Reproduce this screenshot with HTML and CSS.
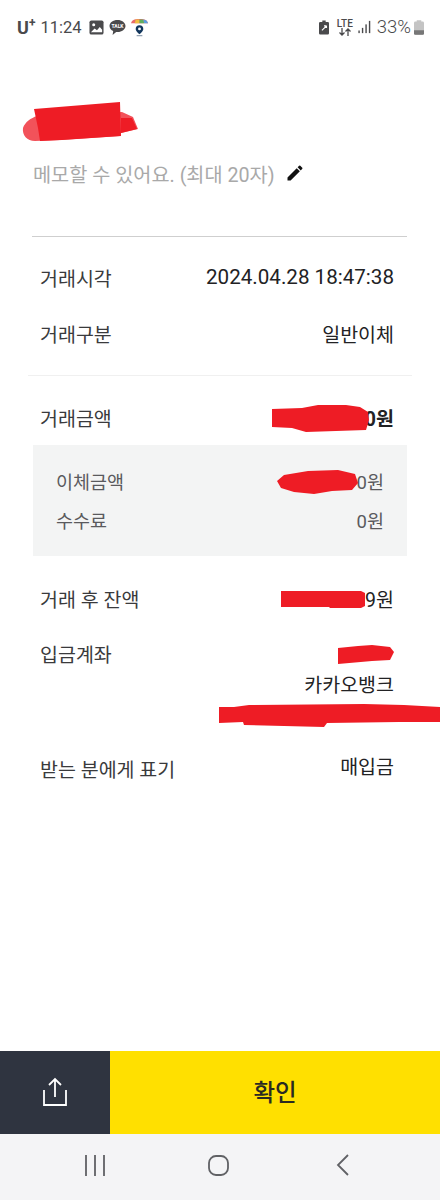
FILE: index.html
```html
<!DOCTYPE html>
<html lang="ko">
<head>
    <meta charset="UTF-8">
    <meta name="viewport" content="width=device-width, initial-scale=1.0">
    <title>거래 상세</title>
    <link rel="stylesheet" href="styles.css">
</head>
<body>
    <div class="status-bar">
        <div class="status-left">
            <span class="carrier">U<sup>+</sup></span>
            <span class="clock">11:24</span>
            <svg class="icon-gallery" width="15" height="15" viewBox="0 0 16 16"><rect x="0.5" y="0.5" width="15" height="15" rx="2" fill="#4a4a4c"/><circle cx="5" cy="5" r="1.6" fill="#fff"/><path d="M2 13l4-4 2.500 2 3-3.500 2.500 3V13z" fill="#fff"/></svg>
            <svg class="icon-talk" width="17" height="17" viewBox="0 0 17 17"><path d="M8.500 1C4 1 .5 3.600.5 7c0 2.200 1.500 4 3.700 5.100L3.600 16l3.600-3.100c.4.100.9.100 1.300.100 4.500 0 8-2.700 8-6S13 1 8.500 1z" fill="#4a4a4c"/><text x="8.500" y="9" class="talk-text" text-anchor="middle">TALK</text></svg>
            <svg class="icon-map" width="19" height="19" viewBox="0 0 20 20"><path d="M1 5.500C2 2 4 1 10 1s8 1 9 4.500z" fill="#e86a6a"/><path d="M6 1.500h4V5.500H5z" fill="#f0c040"/><path d="M10 1.500h4l1 4h-5z" fill="#60b060"/><path d="M14 1.500c3 .3 4 1.500 5 4h-4z" fill="#5aa0e0"/><path d="M10 7.500a4 4 0 0 1 4 4c0 2.500-4 5.500-4 5.500s-4-3-4-5.500a4 4 0 0 1 4-4z" fill="#12365c"/><circle cx="10" cy="11.500" r="1.500" fill="#fff"/><rect x="7" y="18" width="6" height="1.200" fill="#8a9aac"/></svg>
        </div>
        <div class="status-right">
            <svg width="10" height="15" viewBox="0 0 12 17"><path d="M4 0h4v2h2.500A1.500 1.500 0 0 1 12 3.500v12a1.500 1.500 0 0 1-1.500 1.500h-9A1.500 1.500 0 0 1 0 15.500v-12A1.500 1.500 0 0 1 1.500 2H4z" fill="#4a4a4c"/><path d="M9 6.500L3.500 12 M9 6.500H6 M9 6.500V9" fill="none" stroke="#fff" stroke-width="1.300"/></svg>
            <span class="lte"><span class="lte-text">LTE</span><svg width="14" height="8" viewBox="0 0 14 8"><path d="M4 0v7M1.500 4.500L4 7l2.500-2.500M10 8V1M7.500 3.500L10 1l2.500 2.500" fill="none" stroke="#4a4a4c" stroke-width="1.300"/></svg></span>
            <svg width="13" height="14" viewBox="0 0 14 16"><rect x="0" y="12" width="1.600" height="3" fill="#4a4a4c"/><rect x="4" y="9" width="1.600" height="6" fill="#4a4a4c"/><rect x="8" y="5" width="1.600" height="10" fill="#4a4a4c"/><rect x="12" y="1" width="1.600" height="14" fill="#4a4a4c"/></svg>
            <span class="battery-pct">33%</span>
            <svg width="10" height="15" viewBox="0 0 11 16"><path d="M3 0h5v1.500h1.500A1.500 1.500 0 0 1 11 3v11.500a1.500 1.500 0 0 1-1.500 1.500h-8A1.500 1.500 0 0 1 0 14.500V3a1.500 1.500 0 0 1 1.500-1.500H3z" fill="#c4c4c4"/><path d="M0 11h11v3.500a1.500 1.500 0 0 1-1.500 1.500h-8A1.500 1.500 0 0 1 0 14.500z" fill="#777"/></svg>
        </div>
    </div>

    <div class="content">
        <div class="heading"></div>
        <div class="memo">
            <span>메모할 수 있어요. (최대 20자)</span>
            <svg width="20" height="20" viewBox="0 0 24 24"><path d="M3 17.250V21h3.750L17.810 9.940l-3.750-3.750L3 17.250zM20.710 7.040a1 1 0 0 0 0-1.410l-2.340-2.340a1 1 0 0 0-1.410 0l-1.830 1.830 3.750 3.750 1.830-1.830z" fill="#111"/></svg>
        </div>

        <hr class="line">

        <div class="group first">
            <div class="row"><span>거래시각</span><span class="value date">2024.04.28 18:47:38</span></div>
            <div class="row"><span>거래구분</span><span class="value">일반이체</span></div>
        </div>

        <hr class="line-thin">

        <div class="row amount"><span>거래금액</span><span class="value strong">0원</span></div>
        <div class="detail">
            <div class="detail-row"><span>이체금액</span><span>0원</span></div>
            <div class="detail-row"><span>수수료</span><span>0원</span></div>
        </div>

        <div class="row balance"><span>거래 후 잔액</span><span class="value">9원</span></div>
        <div class="row account">
            <span>입금계좌</span>
            <div class="account-info">
                <span class="value">카카오뱅크</span>
            </div>
        </div>
        <div class="row receiver"><span>받는 분에게 표기</span><span class="value">매입금</span></div>
    </div>

    <div class="actions">
        <button class="share" aria-label="공유">
            <svg width="24" height="29" viewBox="0 0 24 29"><path d="M12 20V2M6 8l6-6 6 6M1 13v15h22V13" fill="none" stroke="#fff" stroke-width="1.800"/></svg>
        </button>
        <button class="confirm">확인</button>
    </div>

    <div class="nav-bar">
        <svg class="nav-recent" width="20" height="21" viewBox="0 0 20 21"><path d="M1 0v21M10 0v21M19 0v21" fill="none" stroke="#606165" stroke-width="1.800"/></svg>
        <svg class="nav-home" width="21" height="21" viewBox="0 0 21 21"><rect x="1" y="1" width="19" height="19" rx="7" fill="none" stroke="#606165" stroke-width="1.800"/></svg>
        <svg class="nav-back" width="13" height="22" viewBox="0 0 13 22"><path d="M12 1L2 11l10 10" fill="none" stroke="#606165" stroke-width="1.800"/></svg>
    </div>

    <!-- red marker scribbles painted over the screenshot -->
    <svg class="scribbles" width="440" height="1200" viewBox="0 0 440 1200">
        <g fill="#ee1c25">
            <path d="M23 128c2-6 8-10 14-12l85-4 11 5 5 12-17 4-1 3-60 4-25 1c-8 0-13-6-12-13z" fill="#f2525a"/>
            <path d="M34 109l86-7 1 34-59 4-22 1-2-13z"/>
            <path d="M121 118l11 0 5 11-16 4z"/>
            <path d="M272 409l30-1 16-3h28l14 2 8 5 1 8-3 10-30 1-30 1-14-4-20-1z"/>
            <path d="M277 481l7-6 24-4 30-1 17 4 3 9-6 7-20 1-18 3-20-2-13-4z"/>
            <path d="M281 591h80l4 2v13l-4 2h-31l-1-1h-48z"/>
            <path d="M338 648l20-2 14-1 18 2 4 5-4 8-18 1-34 3z"/>
            <path d="M219 707h15l15-2 115-1 40 1 36 2v15h-41l-72 1-3 4-80-2-1-3-24 1z"/>
        </g>
    </svg>
</body>
</html>
```

FILE: styles.css
```css
/* General Styles */
html, body {
    margin: 0;
    height: 100%;
}

body {
    position: relative;
    display: flex;
    flex-direction: column;
    height: 1200px;
    overflow: hidden;
    background-color: #fff;
    color: #3a3a3c;
    font-family: "Roboto", "Noto Sans CJK KR", sans-serif;
    font-size: 19.5px;
}

/* Status bar */
.status-bar {
    display: flex;
    justify-content: space-between;
    align-items: center;
    height: 54px;
    padding: 0 16px 0 17px;
    box-sizing: border-box;
    color: #4a4a4c;
}

.status-left, .status-right {
    display: flex;
    align-items: center;
}

.status-left {
    gap: 5px;
}

.status-right {
    gap: 5px;
}

.carrier {
    font-size: 18px;
    font-weight: 700;
}

.carrier sup {
    font-size: 12px;
    line-height: 0;
}

.clock {
    font-size: 16.500px;
    margin: 0 2px 0 0;
}

.icon-map {
    margin-left: -1px;
}

.talk-text {
    font-size: 5px;
    font-weight: 700;
    fill: #fff;
}

.lte {
    display: flex;
    flex-direction: column;
    align-items: center;
    margin-left: 3px;
    line-height: 9px;
}

.lte-text {
    font-size: 10px;
    font-weight: 500;
}

.battery-pct {
    font-size: 18.500px;
    font-weight: 300;
    margin: 0 -2px 0 1px;
}

/* Main content */
.content {
    flex: 1;
}

.heading {
    height: 105px;
}

.memo {
    display: flex;
    align-items: center;
    gap: 10px;
    padding-left: 33px;
    height: 28px;
    color: #a9a9a9;
    font-size: 19.700px;
}

.line {
    margin: 49px 33px 0 32px;
    border: none;
    border-top: 1px solid #cfcfcf;
}

.line-thin {
    margin: 0 28px;
    border: none;
    border-top: 1px solid #f0f0f0;
}

.row {
    display: flex;
    justify-content: space-between;
    align-items: center;
    height: 56px;
    padding: 0 46px 0 40px;
}

.group.first {
    padding-top: 12px;
    padding-bottom: 14px;
}

.value {
    color: #222224;
}

.date {
    font-size: 20.600px;
}

.value.strong {
    font-weight: 700;
}

.amount {
    height: 69px;
    padding-top: 14px;
    box-sizing: border-box;
}

.detail {
    display: flex;
    flex-direction: column;
    justify-content: center;
    gap: 11px;
    height: 111px;
    margin: 0 33px;
    padding: 0 23px;
    box-sizing: border-box;
    background-color: #f3f4f4;
    color: #5a5a5d;
    font-size: 18.500px;
}

.detail-row {
    display: flex;
    justify-content: space-between;
    height: 28px;
    align-items: center;
}

.balance {
    margin-top: 14px;
}

.account {
    align-items: flex-start;
    height: 117px;
    padding-top: 13px;
    box-sizing: border-box;
}

.account-info {
    display: flex;
    flex-direction: column;
    align-items: flex-end;
    padding-top: 30px;
}

.receiver {
    height: 24px;
    margin-top: 13px;
}

.receiver .value {
    margin-bottom: 5px;
}

/* Bottom buttons */
.actions {
    display: flex;
    height: 83px;
}

button {
    border: none;
    padding: 0;
    font-family: inherit;
}

.share {
    display: flex;
    align-items: center;
    justify-content: center;
    width: 110px;
    padding-bottom: 3px;
    background-color: #2f3440;
}

.confirm {
    flex: 1;
    padding-bottom: 4px;
    background-color: #ffe000;
    color: #2a2a22;
    font-size: 23.500px;
    font-weight: 500;
}

.nav-bar {
    display: flex;
    align-items: center;
    gap: 103px;
    height: 66px;
    padding: 0 0 4px 85px;
    box-sizing: border-box;
    background-color: #f4f4f6;
}

.nav-back {
    margin-left: 4px;
}

.scribbles {
    position: absolute;
    top: 0;
    left: 0;
    pointer-events: none;
}
```
